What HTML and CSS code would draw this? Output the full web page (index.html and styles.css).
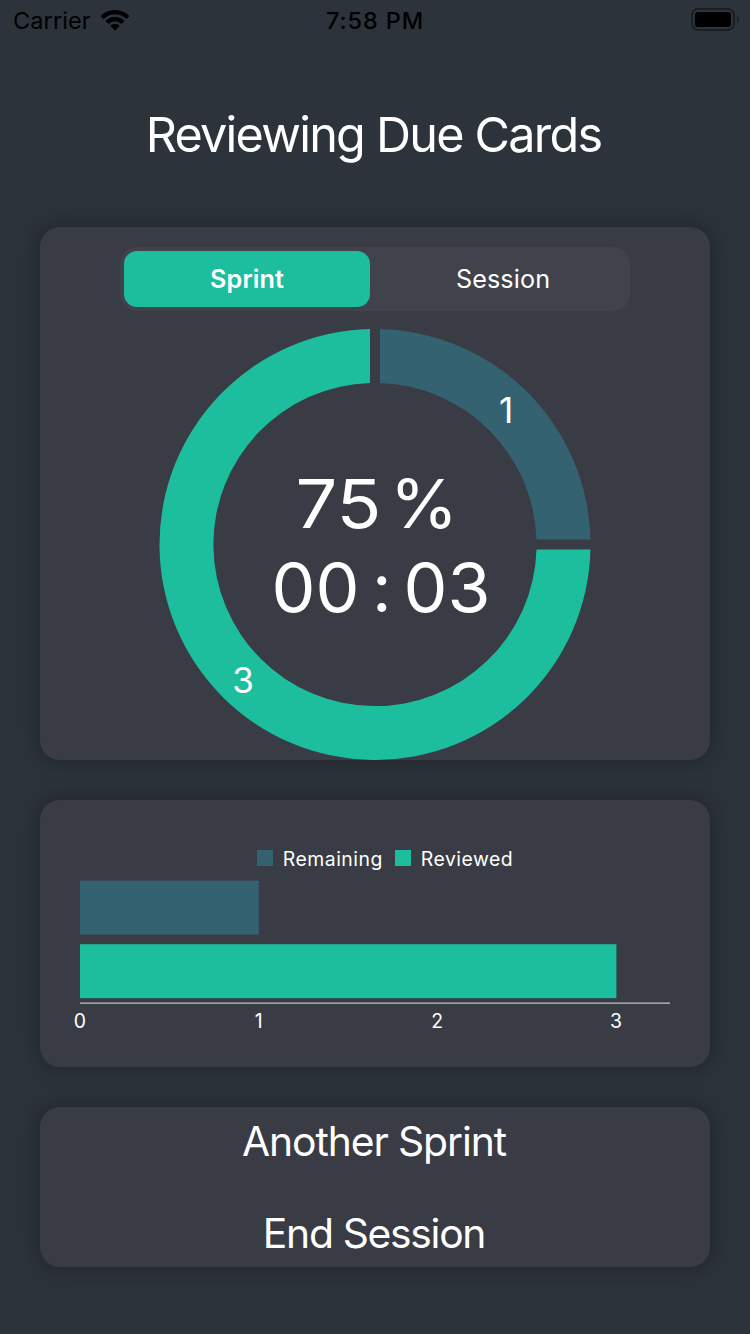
FILE: index.html
```html
<!DOCTYPE html>
<html lang="en">
<head>
<meta charset="utf-8">
<title>Reviewing Due Cards</title>
<link rel="stylesheet" href="styles.css">
</head>
<body>
<div class="screen">
  <header class="status-bar">
    <div class="carrier">
      <span class="carrier-name">Carrier</span>
      <svg class="wifi" width="30" height="22" viewBox="0 0 30 22">
        <path d="M0.5 6.9A20.5 20.5 0 0 1 29.5 6.9L26.4 10A16.2 16.2 0 0 0 3.6 10Z"/>
        <path d="M5.4 11.9A13.6 13.6 0 0 1 24.6 11.9L21.5 15A9.3 9.3 0 0 0 8.5 15Z"/>
        <path d="M10.3 16.8A6.7 6.7 0 0 1 19.7 16.8L15 21.8Z"/>
      </svg>
    </div>
    <div class="clock">7:58 PM</div>
    <svg class="battery" width="48" height="23" viewBox="0 0 48 23">
      <rect class="battery-frame" x="1" y="1" width="42" height="21" rx="6"/>
      <rect x="4" y="4" width="36" height="15" rx="3"/>
      <path class="battery-tip" d="M46 8Q48 9 48 11.5T46 15Z"/>
    </svg>
  </header>

  <h1 class="title">Reviewing Due Cards</h1>

  <main class="cards">
    <section class="card progress-card">
      <div class="segmented">
        <button class="segment segment-active"><span>Sprint</span></button>
        <button class="segment"><span>Session</span></button>
      </div>
      <svg class="donut" width="670" height="431" viewBox="0 0 670 431">
        <path class="remaining" d="M340 0.06A215.5 215.5 0 0 1 550.44 210.5H496.52A161.6 161.6 0 0 0 340 53.98Z"/>
        <path class="reviewed" d="M550.44 220.5A215.5 215.5 0 1 1 330 0.06V53.98A161.6 161.6 0 1 0 496.52 220.5Z"/>
        <text class="slice-value" x="466" y="94">1</text>
        <text class="slice-value" x="203" y="363.8">3</text>
        <text class="figure" y="199"><tspan x="255.5" textLength="86" lengthAdjust="spacingAndGlyphs">75</tspan><tspan x="350" textLength="68" lengthAdjust="spacingAndGlyphs">%</tspan></text>
        <text class="figure" y="283"><tspan x="231.5" textLength="88" lengthAdjust="spacingAndGlyphs">00</tspan><tspan x="332">:</tspan><tspan x="363.5" textLength="87" lengthAdjust="spacingAndGlyphs">03</tspan></text>
      </svg>
    </section>

    <section class="card bar-card">
      <div class="legend">
        <span class="swatch swatch-remaining"></span><span class="legend-label label-remaining">Remaining</span>
        <span class="swatch swatch-reviewed"></span><span class="legend-label">Reviewed</span>
      </div>
      <svg class="bars" width="670" height="160" viewBox="0 0 670 160">
        <rect class="remaining" x="40" y="0.7" width="178.8" height="54"/>
        <rect class="reviewed" x="40" y="64.2" width="536.4" height="54"/>
        <rect class="axis" x="40" y="122.4" width="590" height="1.6"/>
        <text class="tick" x="39.8" y="148">0</text>
        <text class="tick" x="218.6" y="148">1</text>
        <text class="tick" x="397.2" y="148">2</text>
        <text class="tick" x="576" y="148">3</text>
      </svg>
    </section>

    <section class="card actions-card">
      <button class="action action-another">Another Sprint</button>
      <button class="action action-end">End Session</button>
    </section>
  </main>
</div>
</body>
</html>
```

FILE: styles.css
```css
* { box-sizing: border-box; }

body {
  margin: 0;
  background: #2c333a;
  color: #fff;
  font-family: Inter, "Liberation Sans", sans-serif;
}

button {
  margin: 0;
  padding: 0;
  border: 0;
  background: none;
  color: inherit;
  font: inherit;
}

.screen {
  width: 750px;
  height: 1334px;
  overflow: hidden;
  display: flex;
  flex-direction: column;
}

.status-bar {
  height: 40px;
  padding: 0 11px 0 13px;
  display: grid;
  grid-template-columns: 1fr auto 1fr;
  align-items: center;
  color: #000;
  font-size: 23.5px;
}

.carrier { display: flex; align-items: center; gap: 9px; }
.carrier-name { letter-spacing: 0.1px; }
.clock { font-weight: 500; letter-spacing: 0.9px; padding-right: 2px; }
.battery { justify-self: end; margin-top: -1px; }
.battery-frame { fill: none; stroke: #1a1f23; stroke-width: 2; }
.battery-tip { fill: #1a1f23; }

.title {
  height: 187px;
  margin: 0;
  padding: 65px 3px 0 0;
  text-align: center;
  font-size: 48.5px;
  line-height: 60px;
  font-weight: 400;
  letter-spacing: -1.75px;
}

.cards {
  padding: 0 40px;
  display: flex;
  flex-direction: column;
  gap: 40px;
}

.card {
  border-radius: 20px;
  background: #393c45;
  box-shadow: 0 0 20px rgba(20, 20, 30, 0.5);
  display: flex;
  flex-direction: column;
  align-items: center;
}

.progress-card { height: 533px; padding-top: 20px; }

.segmented {
  width: 510px;
  height: 64px;
  margin-bottom: 18px;
  padding: 4px;
  border-radius: 17px;
  background: #40434b;
  display: flex;
  gap: 10px;
}

.segment {
  flex: 1;
  border-radius: 13px;
  font-size: 25.2px;
  letter-spacing: 0.1px;
}

.segment-active { background: #1cbe9e; font-weight: 600; }

.donut, .bars { display: block; flex: none; }
.remaining { fill: #356271; }
.reviewed { fill: #1cbe9e; }
.axis { fill: #a5a7ab; }

text { fill: #fff; }
.figure { font-size: 68px; }
.slice-value { font-size: 35px; text-anchor: middle; }
.tick { font-size: 19.4px; text-anchor: middle; }

.bar-card { height: 267px; padding-top: 46px; }

.legend {
  height: 24px;
  margin-bottom: 10px;
  padding-left: 20px;
  display: flex;
  align-items: center;
  font-size: 19.4px;
  letter-spacing: 0.5px;
}

.legend-label { padding-top: 2px; }
.swatch { width: 16px; height: 16px; margin-right: 10px; }
.swatch-remaining { background: #356271; }
.swatch-reviewed { background: #1cbe9e; }
.label-remaining { margin-right: 12px; }

.actions-card { height: 160px; justify-content: space-between; }

.action {
  height: 68px;
  padding-right: 2px;
  font-size: 40.8px;
  line-height: 68px;
}

.action-another { letter-spacing: -1.1px; }
.action-end { letter-spacing: -1.3px; }
```
